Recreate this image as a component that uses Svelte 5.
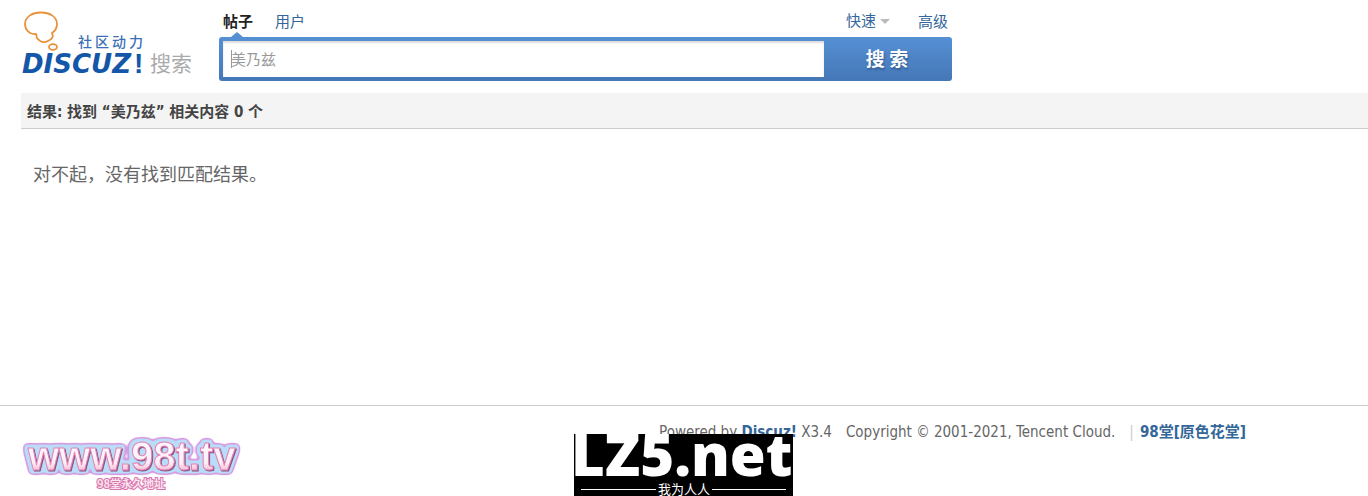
<script>
  let query = $state('美乃兹');
  const searched = '美乃兹';
  const total = 0;
</script>

<div class="page">
  <header>
    <a class="logo" href="#home" aria-label="Discuz! 社区动力 搜索">
      <svg viewBox="0 0 176 72" width="176" height="72">
        <path d="M15 29C9 30 4 25 4 19C4 12 11 7.500 20 7.500C29 7.500 36 12 36 19C36 23 34 26 31 28C33 32 31 34 27 36C23 38 19 37 16 33C15 32 16 30 15 29Z" fill="none" stroke="#e8933a" stroke-width="1.8" />
        <ellipse cx="32" cy="42" rx="4" ry="2.8" fill="none" stroke="#e8933a" stroke-width="1.8" />
        <text class="motto" x="57" y="42">社区动力</text>
        <text class="brand" x="1" y="68">DISCUZ</text>
        <text class="bang" x="113" y="68">!</text>
        <text class="kind" x="129" y="66">搜索</text>
      </svg>
    </a>
    <form onsubmit={(event) => event.preventDefault()}>
      <nav>
        <a class="active" href="#threads">帖子</a>
        <a href="#users">用户</a>
        <a class="quick" href="#quick">快速</a>
        <a class="advanced" href="#advanced">高级</a>
      </nav>
      <div class="search">
        <span class="field">
          <input type="text" aria-label="搜索" bind:value={query} />
        </span>
        <button type="submit">搜 索</button>
      </div>
    </form>
  </header>

  <main>
    <h1>结果: <em>找到 “{searched}” 相关内容 {total} 个</em></h1>
    <p>对不起，没有找到匹配结果。</p>
  </main>

  <footer>
    <span>Powered by <a href="#discuz">Discuz!</a> X3.4</span>
    <span>Copyright © 2001-2021, Tencent Cloud.</span>
    <span class="site"><i>|</i><a href="#site">98堂[原色花堂]</a></span>
  </footer>

  <svg class="stamp" viewBox="0 0 216 62" width="216" height="62">
    <defs>
      <linearGradient id="pink" x1="0" y1="0" x2="0" y2="1">
        <stop offset="0.35" stop-color="#fdf5fb" />
        <stop offset="0.65" stop-color="#fbeff6" />
        <stop offset="0.85" stop-color="#f9b8d4" />
      </linearGradient>
      <filter id="sticker" x="-5%" y="-20%" width="110%" height="140%" color-interpolation-filters="sRGB">
        <feMorphology in="SourceAlpha" operator="dilate" radius="3" result="wide" />
        <feGaussianBlur in="wide" stdDeviation="2" />
        <feComponentTransfer result="outer"><feFuncA type="linear" slope="6" intercept="-1" /></feComponentTransfer>
        <feFlood flood-color="#d79be2" />
        <feComposite in2="outer" operator="in" result="rim" />
        <feGaussianBlur in="wide" stdDeviation="1.5" />
        <feComponentTransfer result="inner"><feFuncA type="linear" slope="4" intercept="-1.6" /></feComponentTransfer>
        <feFlood flood-color="#b9dcf8" />
        <feComposite in2="inner" operator="in" result="halo" />
        <feOffset in="SourceAlpha" dx="1" dy="1" result="moved" />
        <feFlood flood-color="#8a5284" />
        <feComposite in2="moved" operator="in" result="edge" />
        <feMerge>
          <feMergeNode in="rim" />
          <feMergeNode in="halo" />
          <feMergeNode in="edge" />
          <feMergeNode in="SourceGraphic" />
        </feMerge>
      </filter>
    </defs>
    <text class="address" x="5" y="38">www.98t.tv</text>
    <text class="note" x="74" y="56">98堂永久地址</text>
  </svg>

  <svg class="mark" viewBox="0 0 219 62" width="219" height="62">
    <rect width="219" height="62" fill="#000" />
    <text class="net" x="-3" y="42">LZ5.net</text>
    <path d="M7 55.500H82M138 55.500H212" stroke="#fff" />
    <text class="people" x="84" y="60">我为人人</text>
  </svg>
</div>

<style>
  :global(body) {
    margin: 0;
    background: #fff;
  }
  .page {
    position: relative;
    display: flex;
    flex-direction: column;
    min-height: 100vh;
    font: 15px/20px "DejaVu Sans Condensed", "Noto Sans CJK SC", sans-serif;
    color: #666;
  }
  a {
    color: #369;
    text-decoration: none;
  }
  header {
    display: flex;
    gap: 22px;
    padding: 5px 21px 12px;
  }
  .logo {
    flex: none;
    height: 72px;
  }
  .logo svg {
    display: block;
  }
  .motto {
    font: 500 14px "Noto Sans CJK SC", sans-serif;
    fill: #3a70b6;
    letter-spacing: 3px;
  }
  .brand {
    font: italic 700 26px "DejaVu Sans", sans-serif;
    fill: #1456a8;
  }
  .bang {
    font: 700 28px "Liberation Sans", sans-serif;
    fill: #1456a8;
  }
  .kind {
    font: 21px "Noto Sans CJK SC", sans-serif;
    fill: #aaa;
  }
  form {
    width: 733px;
    max-width: 100%;
  }
  nav {
    display: flex;
    gap: 22px;
    height: 32px;
    padding: 0 4px;
    box-sizing: border-box;
    line-height: 34px;
  }
  .active {
    position: relative;
    font-weight: 700;
    color: #222;
  }
  .active::after {
    content: "";
    position: absolute;
    left: 8px;
    bottom: 0;
    border: solid transparent;
    border-width: 0 6px 5px;
    border-bottom-color: #5590d2;
  }
  .quick {
    display: flex;
    align-items: center;
    gap: 4px;
    margin-left: auto;
  }
  .quick::after {
    content: "";
    border: solid transparent;
    border-width: 5px 5px 0;
    border-top-color: #bbb;
  }
  .advanced {
    margin-left: 6px;
  }
  .search {
    display: flex;
    height: 44px;
    box-sizing: border-box;
    padding: 4px 0 4px 4px;
    border-radius: 3px;
    background: linear-gradient(#5590d4, #4577b7);
  }
  .field {
    flex: 1;
    display: flex;
    background: #fff;
  }
  input {
    width: 100%;
    padding: 0 8px 2px;
    border: 0;
    outline: 0;
    background: linear-gradient(#999, #999) 8px 9px / 1px 18px no-repeat;
    box-shadow: inset 0 2px 2px #ddd;
    color: #999;
    font: 15px "Noto Sans CJK SC", sans-serif;
  }
  button {
    width: 128px;
    padding: 0 2px 3px 0;
    border: 0;
    background: none;
    color: #fff;
    font: 700 19px "Noto Sans CJK SC", sans-serif;
    text-shadow: 1px 2px 2px #345f98;
  }
  main {
    flex: 1;
    margin-left: 21px;
  }
  h1 {
    margin: 0;
    padding: 9px 6px 6px;
    border-bottom: 1px solid #ccc;
    background: #f4f4f4;
    color: #444;
    font-size: 15px;
    line-height: 20px;
  }
  em {
    font-style: normal;
  }
  p {
    margin: 32px 12px;
    font-size: 18px;
    line-height: 28px;
  }
  footer {
    display: flex;
    justify-content: flex-end;
    gap: 14px;
    padding: 16px 122px 54px 21px;
    border-top: 1px solid #ccc;
  }
  footer a {
    font-weight: 700;
  }
  footer i {
    margin-right: 6px;
    color: #ccc;
    font-style: normal;
  }
  .stamp {
    position: absolute;
    left: 23px;
    bottom: 2px;
    overflow: visible;
  }
  .address {
    font: 700 40px "Liberation Sans", sans-serif;
    fill: url(#pink);
    stroke: #e583b3;
    stroke-width: 1px;
    stroke-linejoin: round;
    filter: url(#sticker);
  }
  .note {
    font: 700 11px "Noto Sans CJK SC", sans-serif;
    fill: #fbe3ef;
    stroke: #d873ac;
    stroke-width: 2px;
    paint-order: stroke;
  }
  .mark {
    position: absolute;
    left: calc(50% - 110px);
    bottom: 0;
  }
  .net {
    font: 800 58px "Open Sans", sans-serif;
    fill: #fff;
  }
  .people {
    font: 13px "Noto Sans CJK SC", sans-serif;
    fill: #fff;
  }
</style>
